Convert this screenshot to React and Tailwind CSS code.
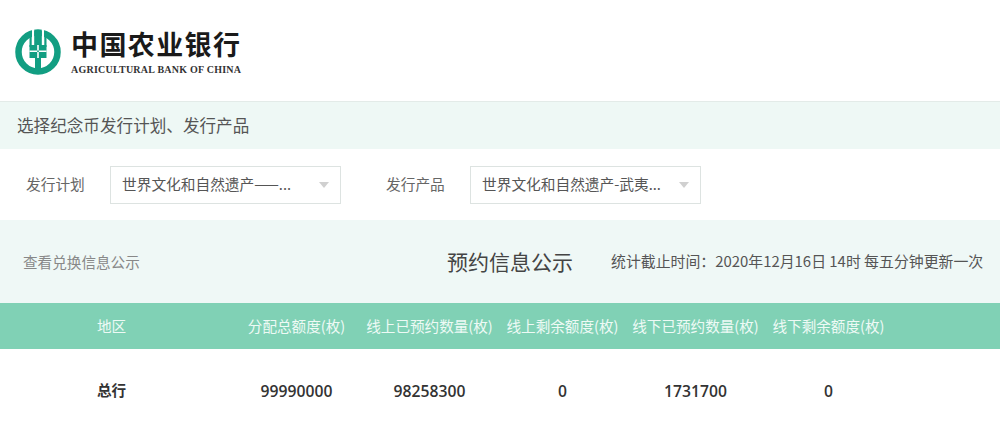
import React from 'react';

const cjk = { fontFamily: '"Noto Sans CJK SC", sans-serif' };

const columns = ['分配总额度(枚)', '线上已预约数量(枚)', '线上剩余额度(枚)', '线下已预约数量(枚)', '线下剩余额度(枚)'];
const values = ['99990000', '98258300', '0', '1731700', '0'];

const Logo = () => (
  <svg width="46" height="46" viewBox="0 0 46 46">
    <circle cx="23" cy="23" r="19.5" fill="none" stroke="#129e82" strokeWidth="6.5" />
    {/* white slots through the top of the ring */}
    <path d="M17 0h2.2v13H17zM26.8 0H29v13h-2.2z" fill="#fff" />
    <path d="M19.2 2h7.6v14h-7.6z" fill="#129e82" />
    <path d="M14.5 8h2.2v8h12.6V8h2.2v10H14.5z" fill="#129e82" />
    <path d="M14.5 16h17v13h-17z" fill="#129e82" />
    <path d="M14.5 21.5h17v1.6h-17zM22.2 16v13h1.6V16z" fill="#fff" />
    <path d="M20 29h6v14h-6z" fill="#129e82" />
  </svg>
);

const Select = ({ label }) => (
  <div className="flex h-[38px] w-[231px] items-center justify-between border border-[#dde3e1] bg-white pl-[11px] pr-[11px] text-[14.7px] text-[#555]">
    <span>{label}</span>
    <span className="h-0 w-0 border-x-[5px] border-t-[6px] border-x-transparent border-t-[#d0d0d0]" />
  </div>
);

export default function App() {
  return (
    <div className="h-[431px] w-[1000px] overflow-hidden bg-white" style={cjk}>
      <header className="flex h-[102px] items-start gap-[10px] border-b border-[#e3ebe8] pl-[15px] pt-[29px]">
        <Logo />
        <div className="-mt-[1px]">
          <div className="text-[27px] font-bold leading-[32px] tracking-[1.4px] text-[#1a1a1a]">中国农业银行</div>
          <div className="mt-[5px] text-[10px] font-bold leading-[10px] tracking-[0.24px] text-[#333]" style={{ fontFamily: '"Liberation Serif", serif' }}>
            AGRICULTURAL BANK OF CHINA
          </div>
        </div>
      </header>

      <div className="flex h-[47px] items-center bg-[#eef8f5] pl-[17px] text-[16.6px] text-[#555]">选择纪念币发行计划、发行产品</div>

      <div className="flex h-[71px] items-center">
        <span className="ml-[26px] w-[84px] text-[14.7px] text-[#666]">发行计划</span>
        <Select label="世界文化和自然遗产——..." />
        <span className="ml-[45px] w-[84px] text-[14.7px] text-[#666]">发行产品</span>
        <Select label="世界文化和自然遗产-武夷..." />
      </div>

      <div className="flex h-[83px] items-center bg-[#eff8f6]">
        <span className="ml-[23px] w-[424px] text-[14.6px] text-[#888]">查看兑换信息公示</span>
        <span className="w-[164px] text-[21px] text-[#444]">预约信息公示</span>
        <span className="text-[14.9px] text-[#555]">统计截止时间：2020年12月16日 14时 每五分钟更新一次</span>
      </div>

      <div className="grid h-[46px] grid-cols-[230px_repeat(5,133px)] items-center bg-[#80d1b5] text-center text-[14.6px] text-[#eefaf5]">
        <span className="pl-[97px] text-left">地区</span>
        {columns.map((c) => (
          <span key={c} className="whitespace-nowrap">{c}</span>
        ))}
      </div>

      <div className="grid h-[82px] grid-cols-[230px_repeat(5,133px)] items-center text-center font-bold text-[#333]">
        <span className="pl-[97px] text-left text-[14.6px]">总行</span>
        {values.map((v, i) => (
          <span key={i} className="pt-[3px] text-[15.7px] font-semibold" style={{ fontFamily: '"Open Sans", sans-serif' }}>{v}</span>
        ))}
      </div>
    </div>
  );
}
